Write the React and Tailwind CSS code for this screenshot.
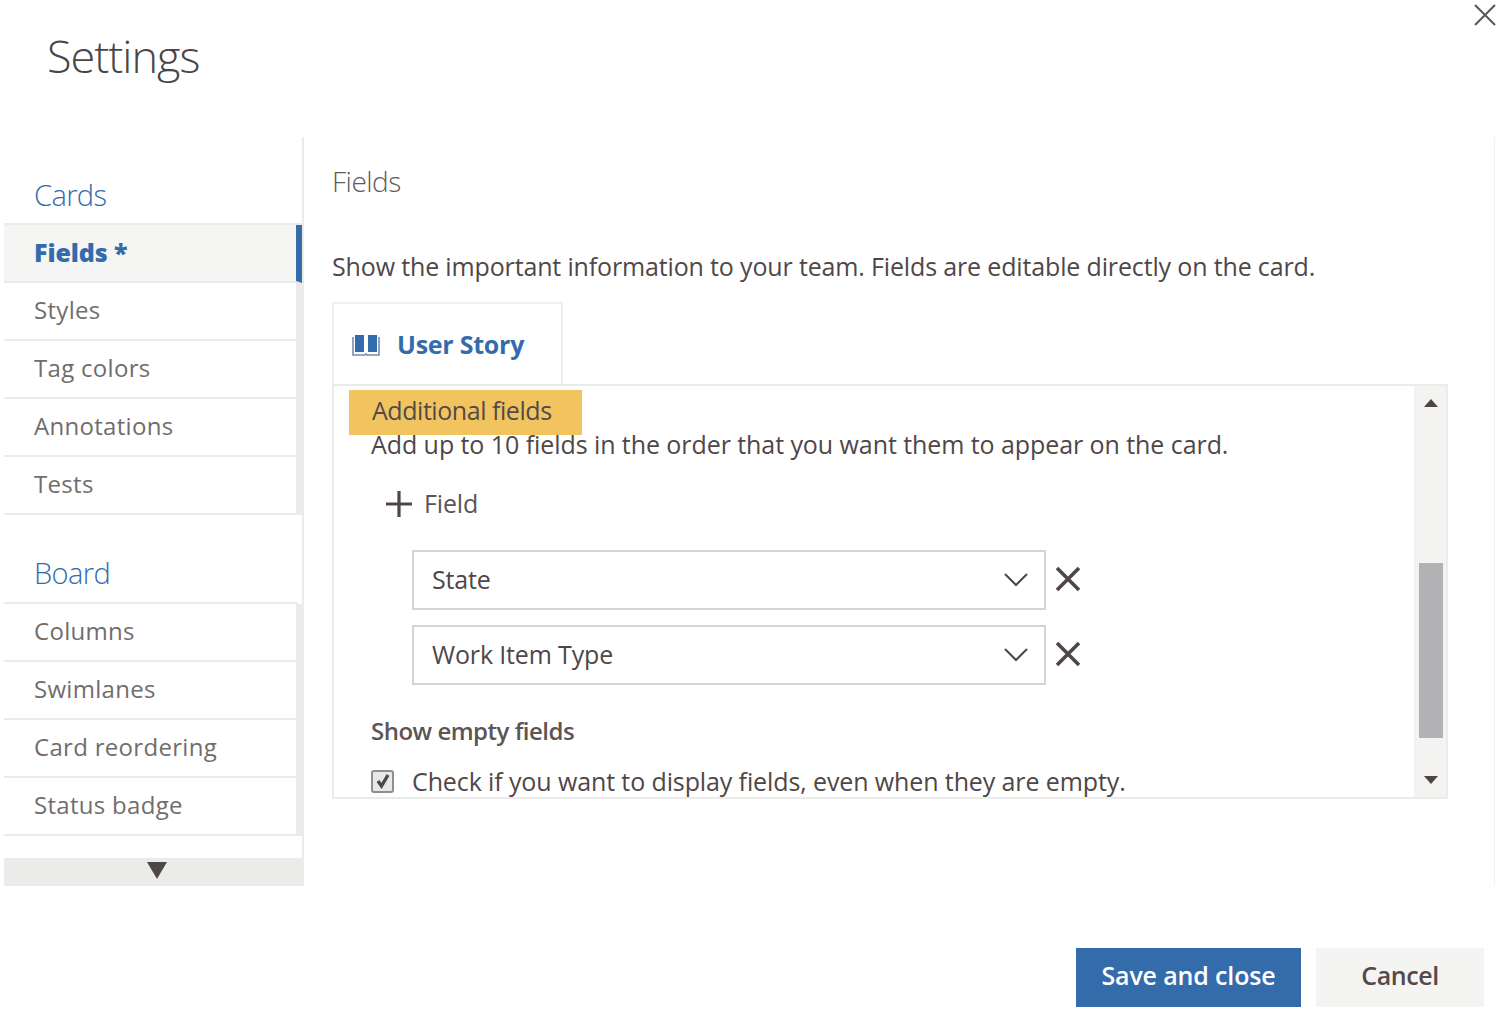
const sidebarFont = "font-['Open_Sans','Noto_Sans',sans-serif]";

function NavItem({ label, active }) {
  if (active) {
    return (
      <div className="h-[58px] flex items-center pl-[30px] pb-[1px] bg-[#f5f5f4] border-b-2 border-[#ebebea] border-r-[6px] border-r-[#346cab]">
        <span className="text-[25px] font-extrabold text-[#346cab] tracking-[-0.1px]">{label}</span>
      </div>
    );
  }
  return (
    <div className="h-[58px] flex items-center pl-[30px] pb-[3px] border-b-2 border-[#ebebea] border-r-[6px] border-r-[#ebebea]">
      <span className="text-[24px] text-[#716d6d] tracking-[0.3px]">{label}</span>
    </div>
  );
}

function SelectRow({ label }) {
  return (
    <div className="flex items-center gap-[9px]">
      <div className="w-[634px] h-[60px] border-2 border-[#d4d4d4] flex items-center justify-between pl-[18px] pr-[15px]">
        <span className="text-[25px] text-[#4f4747] tracking-[-0.15px]">{label}</span>
        <svg width="26" height="16" viewBox="0 0 26 16" fill="none" stroke="#4f4747" strokeWidth="2">
          <path d="M2 2l11 11L24 2" />
        </svg>
      </div>
      <svg width="26" height="26" viewBox="0 0 26 26" fill="none" stroke="#4f4545" strokeWidth="3.6" className="-mt-[2px]">
        <path d="M2 2l22 22M24 2L2 24" />
      </svg>
    </div>
  );
}

export default function App() {
  return (
    <div className={`w-[1499px] h-[1011px] bg-white relative overflow-hidden flex flex-col ${sidebarFont}`}>
      <svg width="22" height="22" viewBox="0 0 22 22" fill="none" stroke="#5c5656" strokeWidth="2" className="absolute left-[1474px] top-[4px]">
        <path d="M1 1l20 20M21 1L1 21" />
      </svg>

      <div className="h-[137px] pl-[47px] pt-[25px] shrink-0">
        <h1 className="text-[45px] leading-[62px] font-light text-[#4a4545] tracking-[-1px]">Settings</h1>
      </div>

      <div className="h-[749px] flex shrink-0">
        <aside className="w-[304px] shrink-0 pl-[4px] border-r-2 border-[#ebebea] flex flex-col">
          <div className="h-[88px] flex items-end pl-[30px] pb-[7px] border-b-2 border-[#ebebea] mr-[-2px]">
            <span className="text-[29px] font-light text-[#346cab] tracking-[-0.6px]">Cards</span>
          </div>
          <NavItem label="Fields *" active />
          <NavItem label="Styles" />
          <NavItem label="Tag colors" />
          <NavItem label="Annotations" />
          <NavItem label="Tests" />
          <div className="h-[89px] flex items-end pl-[30px] pb-[8px] border-b-2 border-[#ebebea] mr-[4px]">
            <span className="text-[29px] font-light text-[#346cab] tracking-[-0.6px]">Board</span>
          </div>
          <NavItem label="Columns" />
          <NavItem label="Swimlanes" />
          <NavItem label="Card reordering" />
          <NavItem label="Status badge" />
          <div className="flex-1" />
          <div className="h-[28px] bg-[#ebebea] flex justify-center items-center -mr-[2px]">
            <svg width="20" height="18" viewBox="0 0 20 18" className="ml-[6px] mb-[4px]">
              <path d="M0 1h20L10 18z" fill="#4f4747" />
            </svg>
          </div>
        </aside>

        <main className="flex-1 pl-[28px] pr-[46px] mr-[5px] border-r border-[#f1f1f1] flex flex-col">
          <h2 className="text-[28px] leading-[38px] font-light text-[#5f5a5a] mt-[25px] tracking-[-0.5px]">Fields</h2>
          <p className="text-[25px] leading-[34px] text-[#4f4747] mt-[49px] tracking-[-0.15px] whitespace-nowrap">
            Show the important information to your team. Fields are editable directly on the card.
          </p>

          <div className="w-[231px] h-[83px] mt-[19px] border-2 border-b-0 border-[#efefef] flex items-center pl-[18px] gap-[17px]">
            <svg width="28" height="24" viewBox="0 0 28 24" className="shrink-0">
              <path d="M3 2h9v17H3zM16 2h9v17h-9z" fill="#346cab" />
              <path d="M1 4v18h12l1-1 1 1h12V4" fill="none" stroke="#6f8fb5" strokeWidth="1.6" />
            </svg>
            <span className="text-[25px] font-bold text-[#346cab] tracking-[-0.25px]">User Story</span>
          </div>

          <div className="w-[1116px] h-[415px] border-2 border-[#ebebea] flex -mt-[1px]">
            <div className="flex-1 overflow-hidden">
              <div className="ml-[15px] mt-[4px] w-[233px] h-[45px] bg-[#f2c45f] flex items-center pl-[23px] pb-[4px]">
                <span className="text-[25px] text-[#54494a] tracking-[-0.45px] font-medium">Additional fields</span>
              </div>
              <div className="pl-[37px]">
                <p className="text-[25px] leading-[20px] text-[#4f4747] -mt-[1px] tracking-[-0.07px] whitespace-nowrap">
                  Add up to 10 fields in the order that you want them to appear on the card.
                </p>
                <div className="flex items-center mt-[32px] pl-[14px] gap-[11px] h-[36px]">
                  <svg width="28" height="28" viewBox="0 0 28 28" stroke="#4f4747" strokeWidth="3.2">
                    <path d="M1 14h26M14 1v26" />
                  </svg>
                  <span className="text-[25px] text-[#5c5555] tracking-[-0.15px]">Field</span>
                </div>
                <div className="pl-[41px] mt-[28px] flex flex-col gap-[15px]">
                  <SelectRow label="State" />
                  <SelectRow label="Work Item Type" />
                </div>
                <div className="text-[24px] leading-[32px] font-semibold text-[#5c5555] mt-[30px] tracking-[-0.5px]">Show empty fields</div>
                <div className="flex items-center mt-[19px] gap-[18px]">
                  <div className="w-[23px] h-[23px] rounded-[3px] border-2 border-[#8f8f8f] bg-[#e8e8e8] flex items-center justify-center shrink-0">
                    <svg width="16" height="16" viewBox="0 0 16 16" fill="none" stroke="#4f4747" strokeWidth="3.4">
                      <path d="M3 8l3.5 5L13 2" />
                    </svg>
                  </div>
                  <span className="text-[25px] leading-[30px] text-[#4f4747] tracking-[-0.11px] whitespace-nowrap">
                    Check if you want to display fields, even when they are empty.
                  </span>
                </div>
              </div>
            </div>

            <div className="w-[32px] bg-[#f3f3f2] border-l border-[#f0f0f0] flex flex-col items-center shrink-0">
              <svg width="14" height="8" viewBox="0 0 14 8" className="mt-[13px] shrink-0">
                <path d="M7 0l7 8H0z" fill="#4f4545" />
              </svg>
              <div className="w-[24px] h-[175px] bg-[#b2b2b4] mt-[156px] shrink-0" />
              <svg width="14" height="8" viewBox="0 0 14 8" className="mt-[38px] shrink-0">
                <path d="M0 0h14L7 8z" fill="#4f4545" />
              </svg>
            </div>
          </div>
        </main>
      </div>

      <footer className="flex-1 flex items-start justify-end gap-[15px] pt-[62px] pr-[15px]">
        <button className="w-[225px] h-[59px] pb-[4px] bg-[#346cab] text-white text-[25px] font-semibold tracking-[-0.15px]">Save and close</button>
        <button className="w-[168px] h-[59px] pb-[4px] bg-[#f4f4f2] text-[#54494a] text-[25px] font-semibold tracking-[-0.4px]">Cancel</button>
      </footer>
    </div>
  );
}
